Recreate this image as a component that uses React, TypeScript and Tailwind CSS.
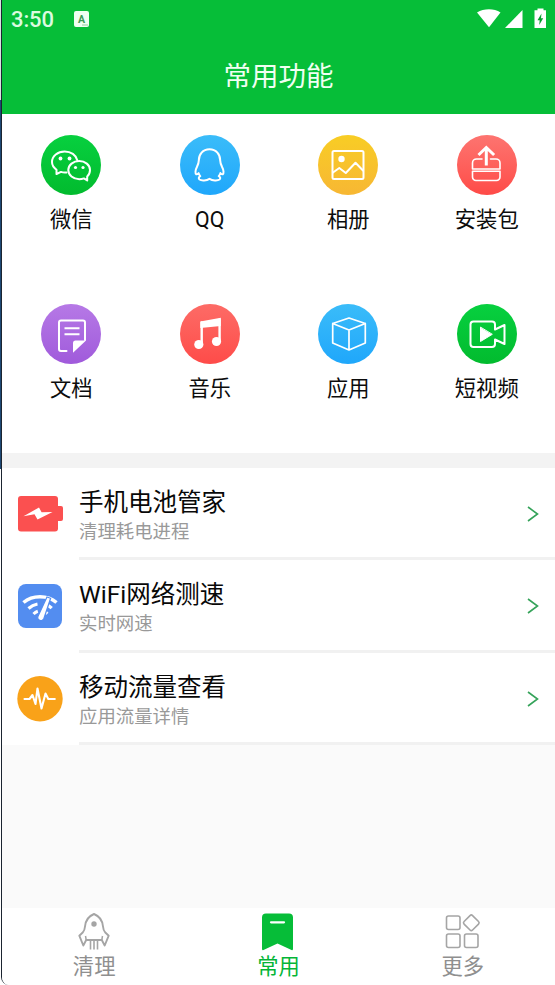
import type { ReactNode } from 'react';

type Feature = {
  label: string;
  gradient: string;
  icon: ReactNode;
};

type Tool = {
  title: string;
  subtitle: string;
  icon: ReactNode;
};

const FONT = "font-[Roboto,'Noto_Sans_CJK_SC',sans-serif]";

// All round icons share a 60x60 canvas
const Glyph = ({ children }: { children: ReactNode }) => (
  <svg
    viewBox="0 0 60 60"
    className="w-[60px] h-[60px]"
    fill="none"
    stroke="white"
    strokeWidth="2"
    strokeLinecap="round"
    strokeLinejoin="round"
  >
    {children}
  </svg>
);

const features: Feature[] = [
  {
    label: '微信',
    gradient: 'from-[#07d03f] to-[#02bb2e]',
    icon: (
      <Glyph>
        <path d="M25.5 37.5c-2 .2-4 0-5.5-.6L15.5 39v-4.3C12.5 32.5 11 30 11 27c0-6 5.8-10.5 12.7-10.5 6.3 0 11.3 3.6 12.6 8.7" />
        <path d="M49 35c0-5-4.9-9-10.8-9s-10.9 4-10.9 9 4.9 9.2 10.9 9.2c1.7 0 3.3-.3 4.7-.8l3.3 2v-4C48 39.8 49 37.5 49 35z" />
        <g fill="white" stroke="none">
          <circle cx="19.5" cy="23.5" r="1.9" />
          <circle cx="28.5" cy="23.5" r="1.9" />
          <circle cx="34.5" cy="32.5" r="1.6" />
          <circle cx="42" cy="32.5" r="1.6" />
        </g>
      </Glyph>
    ),
  },
  {
    label: 'QQ',
    gradient: 'from-[#3abcf9] to-[#1fa7fb]',
    icon: (
      <Glyph>
        <path d="M29.5 14.3c-6.8 0-10.7 5.3-10.7 11.2 0 2.5-.7 4-1.9 6.5-1.7 3.2-1.8 6.8-.7 7.3.8.3 1.6-.4 2.4-1.2.3 1.4.9 2.2 1.7 3-1.7.7-2 2.4-.8 3.4 2.1 1.5 7 1.1 10-.7 3 1.8 7.9 2.2 10 .7 1.2-1 .9-2.7-.8-3.4.8-.8 1.4-1.6 1.7-3 .8.8 1.6 1.5 2.4 1.2 1.1-.5 1-4.1-.7-7.3-1.2-2.5-1.9-4-1.9-6.5 0-5.9-3.9-11.2-10.7-11.2z" />
      </Glyph>
    ),
  },
  {
    label: '相册',
    gradient: 'from-[#f8cd24] to-[#f7b733]',
    icon: (
      <Glyph>
        <rect x="14.5" y="16" width="31" height="28" rx="1.5" />
        <circle cx="23.5" cy="24" r="3.2" fill="white" stroke="none" />
        <path d="M15 37.5l6.3-4.5 6.5 5 9.7-10.2 7.5 7.7" />
      </Glyph>
    ),
  },
  {
    label: '安装包',
    gradient: 'from-[#fd7470] to-[#fe4a47]',
    icon: (
      <Glyph>
        <path d="M25 24h-5.5a4 4 0 0 0-4 4v6h27.5v-6a4 4 0 0 0-4-4h-5.5" strokeWidth="1.6" />
        <path d="M15.5 36.3h27.5v5.7a3.5 3.5 0 0 1-3.5 3.5h-20.5a3.5 3.5 0 0 1-3.5-3.5z" strokeWidth="1.6" />
        <path d="M29.3 30.5V13M21.5 20l7.8-7.5 7.8 7.5" strokeWidth="3" strokeLinecap="butt" strokeLinejoin="miter" />
      </Glyph>
    ),
  },
  {
    label: '文档',
    gradient: 'from-[#b679e6] to-[#a05adb]',
    icon: (
      <Glyph>
        <path d="M25.5 47h-5.5a2 2 0 0 1-2-2V18.5a2 2 0 0 1 2-2h22a2 2 0 0 1 2 2V36" />
        <path d="M23.5 24.3h15M23.5 30.3h15" strokeLinecap="butt" />
        <path d="M45 36.5L32 48.7V39a2.5 2.5 0 0 1 2.5-2.5z" fill="white" stroke="none" />
      </Glyph>
    ),
  },
  {
    label: '音乐',
    gradient: 'from-[#fd6b66] to-[#fe4b49]',
    icon: (
      <Glyph>
        <path d="M20.3 17.6l20.5-3.8v8.2l-20.5 2z" fill="white" stroke="none" />
        <path d="M21.7 18.5v22M39.6 15.5v21" strokeWidth="2.4" />
        <circle cx="18.8" cy="40.5" r="4.6" fill="white" stroke="none" />
        <circle cx="36.5" cy="37.5" r="4.6" fill="white" stroke="none" />
      </Glyph>
    ),
  },
  {
    label: '应用',
    gradient: 'from-[#3abcf9] to-[#1fa7fb]',
    icon: (
      <Glyph>
        <path d="M31 14l16.3 5.5v19.5L31 46l-16.3-7V19.5zM14.7 19.5L31 26l16.3-6.5M31 26v20" strokeWidth="1.7" />
      </Glyph>
    ),
  },
  {
    label: '短视频',
    gradient: 'from-[#07d03f] to-[#02bb2e]',
    icon: (
      <Glyph>
        <path d="M38 25V20.5a3 3 0 0 0-3-3H16.5a3 3 0 0 0-3 3v19.5a3 3 0 0 0 3 3H35a3 3 0 0 0 3-3v-4.5l9.5 4.5V21L38 25.5" />
        <path d="M23.5 23.5v14l11.5-7z" fill="white" strokeWidth="1" />
      </Glyph>
    ),
  },
];

const tools: Tool[] = [
  {
    title: '手机电池管家',
    subtitle: '清理耗电进程',
    icon: (
      <svg viewBox="0 0 46 46" className="w-[46px] h-[46px]">
        <rect x="1" y="5" width="40" height="35.5" rx="3" fill="#fb5050" />
        <rect x="38" y="15" width="8" height="15" rx="2" fill="#fb5050" />
        <path d="M6.5 25.3L22 16.5l2.6 4.7 10.9-.2L20.5 28.5l-3-5.3z" fill="white" />
      </svg>
    ),
  },
  {
    title: 'WiFi网络测速',
    subtitle: '实时网速',
    icon: (
      <svg viewBox="0 0 46 46" className="w-[46px] h-[46px]" fill="none" stroke="white">
        <rect x="1" y="1" width="44" height="44" rx="8" fill="#538df0" stroke="none" />
        <path d="M6.5 19.5C15.5 11.8 30.5 11.8 39.5 19.5" strokeWidth="3.6" />
        <path d="M11.5 25.5c2.6-2.4 5.5-3.9 9-4.5M31 22.3c1.3.8 2.5 1.7 3.7 2.9" strokeWidth="3.2" />
        <path d="M16.5 31c1.3-1.4 2.7-2.3 4.3-2.8M28 28.7c.9.5 1.6 1.2 2.4 2" strokeWidth="3" />
        <path d="M30 14l3.6 1.3-6.7 20.200a3.100 3.100 0 1 1-5.900-2.200z" fill="white" stroke="#538df0" strokeWidth="1.200" />
      </svg>
    ),
  },
  {
    title: '移动流量查看',
    subtitle: '应用流量详情',
    icon: (
      <svg viewBox="0 0 46 46" className="w-[46px] h-[46px]">
        <circle cx="23" cy="22.7" r="22.7" fill="#f9a219" />
        <path
          d="M7.5 23h5l3-4 3 9 2-15.500 4 20 4-15 2.800 5.500h6.500"
          fill="none"
          stroke="white"
          strokeWidth="2.100"
          strokeLinecap="round"
          strokeLinejoin="round"
        />
      </svg>
    ),
  },
];

const StatusBar = () => (
  <div className="flex items-center justify-between h-[38px] pl-[9px] pr-[8px]">
    <div className="flex items-center gap-[20px]">
      <span className="pt-px text-[22px] leading-[38px] tracking-[-0.1px] font-medium text-[#dcfbe0]">3:50</span>
      <svg viewBox="0 0 15 16" className="w-[15px] h-[16px]">
        <rect width="15" height="16" rx="2" fill="#effff1" />
        <text x="7.5" y="11.5" textAnchor="middle" fontSize="10.5" fontWeight="700" fill="#3c9a55">
          A
        </text>
        <path d="M8.5 14h5" stroke="#3c9a55" strokeWidth="1" strokeDasharray="1 1" />
      </svg>
    </div>
    <svg viewBox="0 0 70 22" className="w-[70px] h-[22px]" fill="white">
      <path d="M0 4.5C7 .3 17 .3 23.5 4.5L12 19.3z" />
      <path d="M45.5 2v18H28z" />
      <path d="M60.5.5h6v1.8h2.500V20H57.500V2.300h3z" />
      <path d="M64.5 5.5L60.5 12.3h2.200l-.5 4.700 4-6.800h-2.200z" fill="#04a12d" />
    </svg>
  </div>
);

const FeatureItem = ({ feature }: { feature: Feature }) => (
  <button className="flex flex-col items-center pt-[21px]">
    <span className={`w-[60px] h-[60px] rounded-full bg-linear-to-b ${feature.gradient}`}>{feature.icon}</span>
    <span className="mt-[9px] text-[21.3px] leading-[32px] text-[#0c0c0c]">{feature.label}</span>
  </button>
);

const ToolRow = ({ tool }: { tool: Tool }) => (
  <li className="flex h-[92.3px] pl-[15px] bg-white">
    <div className="mt-[23px] w-[46px] h-[46px] shrink-0">{tool.icon}</div>
    <div className="flex flex-1 justify-between ml-[16px] border-b-[3px] border-[#f1f1f1]">
      <div className="pt-[19px]">
        <h2 className="text-[24.5px] leading-[32px] text-[#080808]">{tool.title}</h2>
        <p className="text-[18.4px] leading-[25px] text-[#999]">{tool.subtitle}</p>
      </div>
      <svg viewBox="0 0 12 18" className="mt-[37px] mr-[16px] w-[12px] h-[18px]">
        <path d="M1 2L10.5 9L1 16" fill="none" stroke="#35a35a" strokeWidth="1.6" />
      </svg>
    </div>
  </li>
);

const BottomNav = () => (
  <nav className="grid grid-cols-3 h-[77px] bg-white text-[21.3px] leading-[28px] text-[#8f8f8f]">
    <button className="flex flex-col items-center pt-[4px]">
      <svg
        viewBox="0 0 34 40"
        className="w-[34px] h-[40px]"
        fill="none"
        stroke="#a5a5a5"
        strokeWidth="1.9"
        strokeLinejoin="round"
      >
        <path d="M17 2C12 4 8.5 9 8 14.5c-.2 2.5-.8 4.500-2.300 6l-3.400 3.200L6.300 33.500 9.200 28h15.600l2.900 5.500 4-9.800-3.400-3.200c-1.500-1.500-2.100-3.500-2.300-6C25.500 9 22 4 17 2z" />
        <path d="M9.2 28l-.7-4M24.8 28l.7-4" strokeWidth="1.5" />
        <path d="M13.5 28V37.5M17 28v9.500M20.5 28V37.5" strokeWidth="1.6" />
        <circle cx="17" cy="12" r="2.7" fill="#a5a5a5" stroke="none" />
      </svg>
      <span className="mt-px">清理</span>
    </button>
    <button className="flex flex-col items-center pt-[4px] text-[#04b537]">
      <svg viewBox="0 0 34 40" className="w-[34px] h-[40px]">
        <path d="M5 1.5h23a4 4 0 0 1 4 4V37a1 1 0 0 1-1.5 1L16.5 31.500 2.500 38A1 1 0 0 1 1 37V5.500a4 4 0 0 1 4-4z" fill="#06bd38" />
        <path d="M10 10.3h13" stroke="white" strokeWidth="2.2" strokeLinecap="round" />
      </svg>
      <span className="mt-px">常用</span>
    </button>
    <button className="flex flex-col items-center pt-[4px]">
      <svg viewBox="0 0 36 40" className="w-[36px] h-[40px]" fill="none" stroke="#a5a5a5" strokeWidth="1.6">
        <rect x="1.5" y="4" width="13.5" height="13.5" rx="2" />
        <rect x="1.5" y="22" width="13.5" height="13.5" rx="2" />
        <rect x="19.5" y="22" width="13.5" height="13.5" rx="2" />
        <rect x="20.3" y="4.8" width="12" height="12" rx="1.8" transform="rotate(45 26.3 10.8)" />
      </svg>
      <span className="mt-px">更多</span>
    </button>
  </nav>
);

const App = () => (
  <div className={`flex w-[555px] h-[985px] overflow-hidden bg-white ${FONT}`}>
    {/* Window edge on the left of the screen */}
    <div className="flex flex-col w-px shrink-0">
      <div className="h-[100px] bg-[#d9e5e0]" />
      <div className="h-[369px] bg-[#1d4874]" />
      <div className="flex-1 bg-white" />
    </div>
    <div className="flex flex-1 flex-col overflow-hidden rounded-bl-[8px] border-l border-[#1b2430] bg-[#fafafa]">
      <header className="h-[114px] shrink-0 bg-[#06be38]">
        <StatusBar />
        <h1 className="pt-px text-center text-[27.5px] leading-[76px] text-[#f0fff2]">常用功能</h1>
      </header>
      <main className="flex-1">
        <section className="grid grid-cols-4 auto-rows-[169px] content-start h-[339px] -mr-px bg-white">
          {features.map((feature) => (
            <FeatureItem key={feature.label} feature={feature} />
          ))}
        </section>
        <div className="h-[15px] bg-[#f3f3f3]" />
        <ul>
          {tools.map((tool) => (
            <ToolRow key={tool.title} tool={tool} />
          ))}
        </ul>
      </main>
      <BottomNav />
    </div>
  </div>
);

export default App;
